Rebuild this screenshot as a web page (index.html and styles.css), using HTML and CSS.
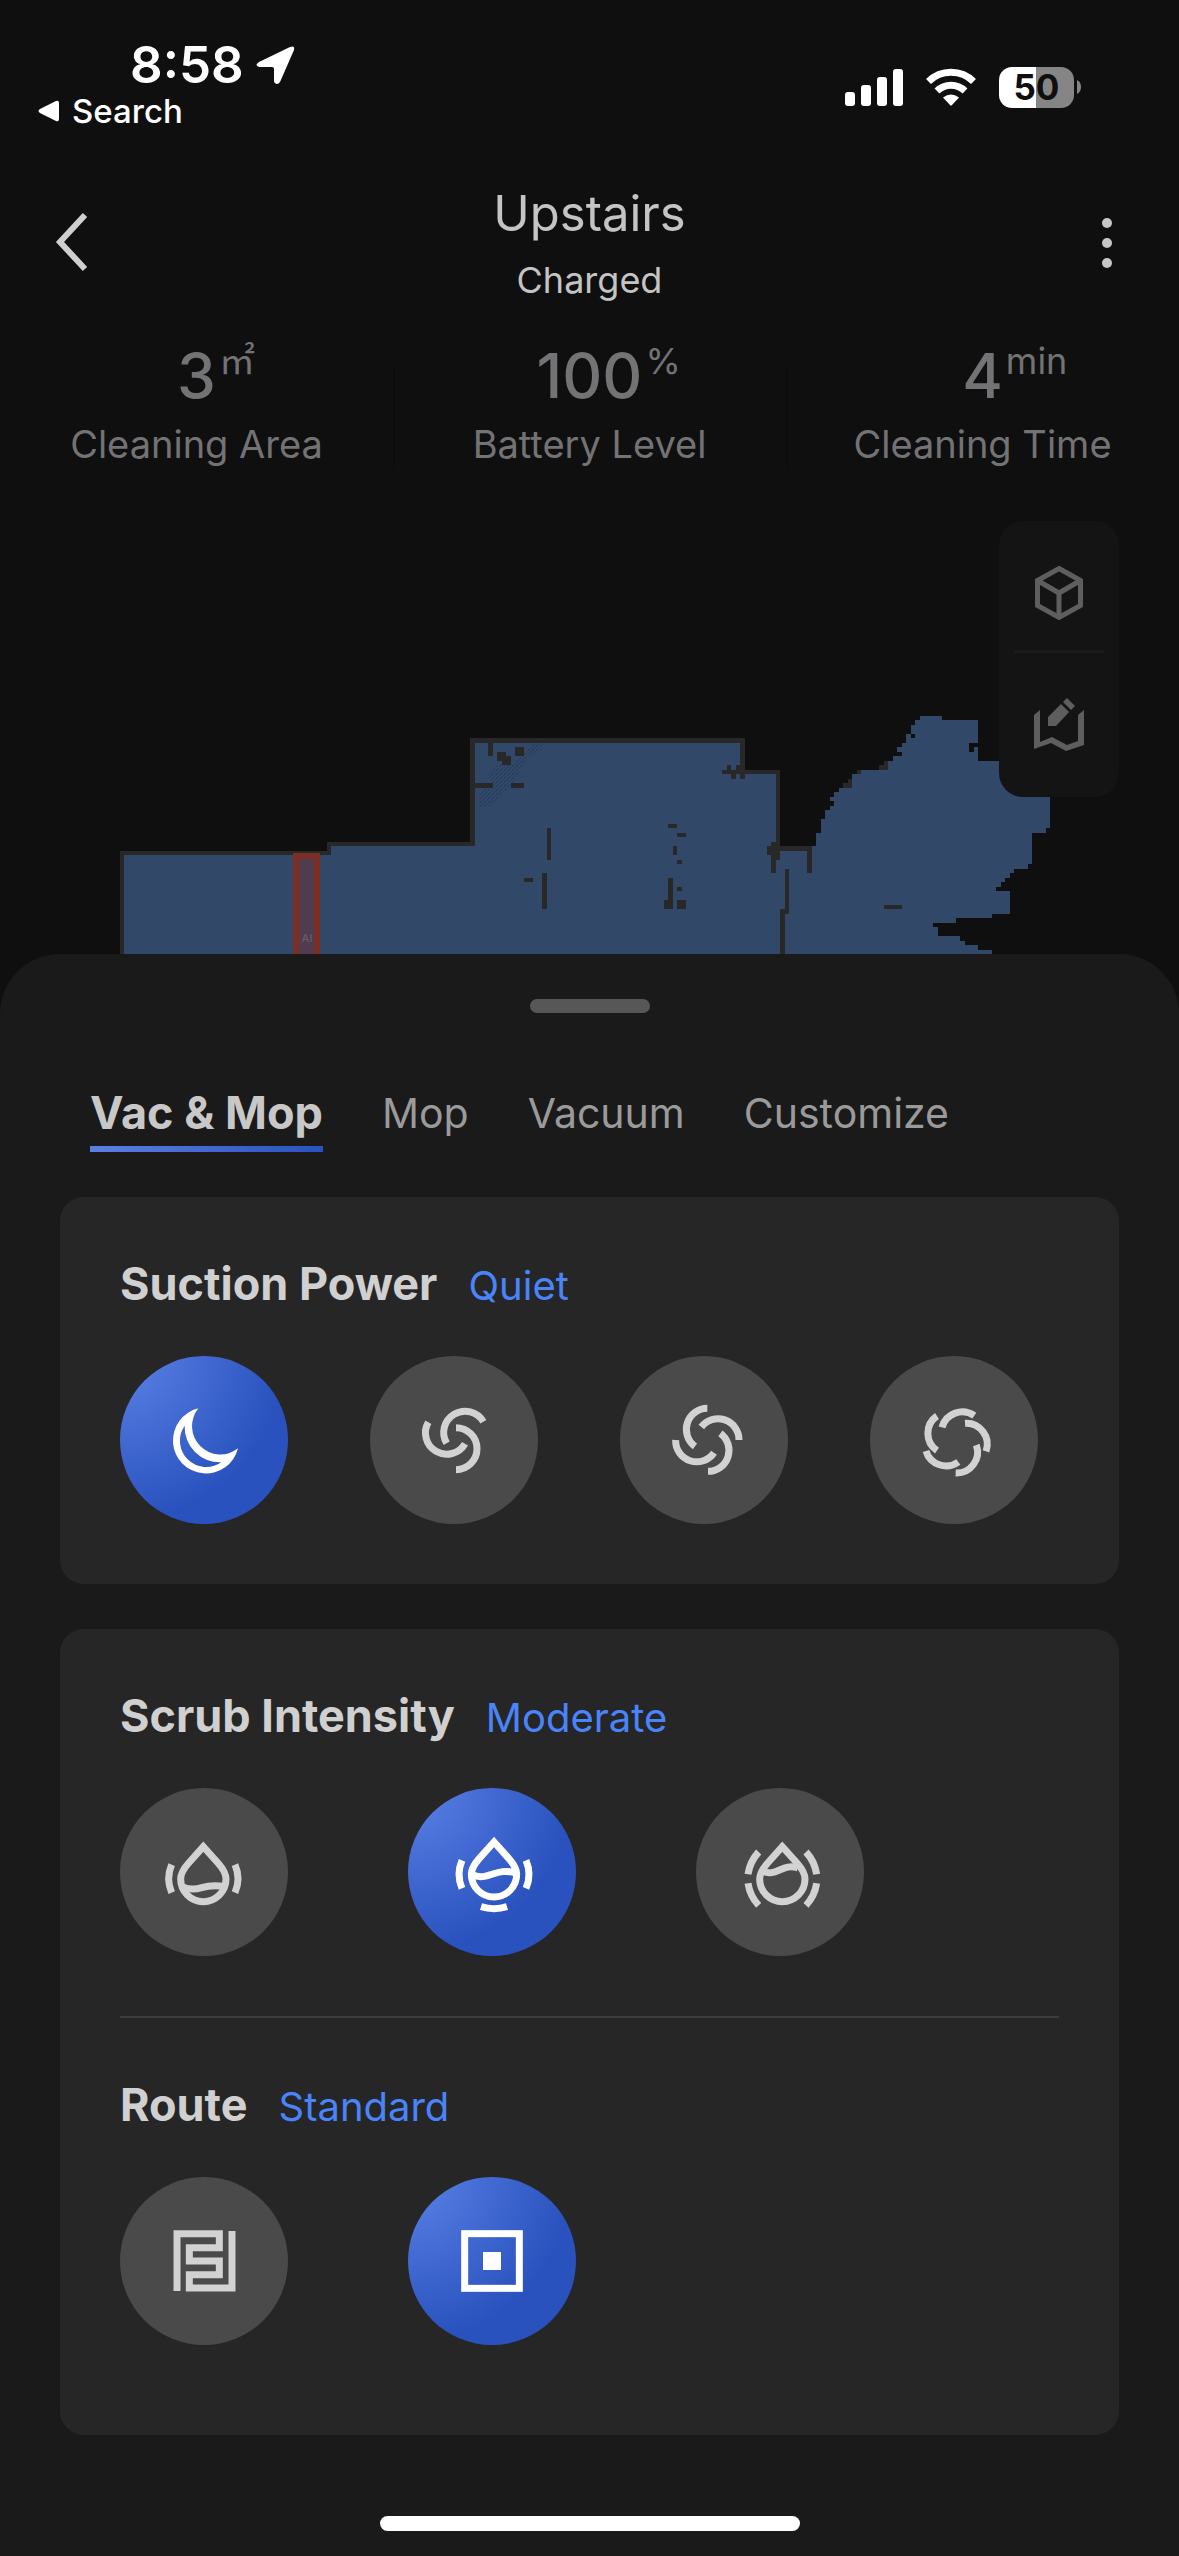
FILE: index.html
```html
<!DOCTYPE html>
<html lang="en">
<head>
    <meta charset="UTF-8">
    <meta name="viewport" content="width=device-width, initial-scale=1.0">
    <title>Upstairs</title>
    <link rel="stylesheet" href="styles.css">
</head>
<body>

<!-- Status Bar -->
<div class="status-bar">
    <div class="status-left">
        <div class="status-time">
            <span>8:58</span>
            <svg class="location-icon" viewBox="0 0 40 40"><path d="M3 17 L34 2 Q39 0 38 5 L24 37 Q21 41 18 37 L18 24 Q18 22 16 22 L3 22 Q-2 20 3 17Z" fill="#fff"/></svg>
        </div>
        <a href="#" class="back-to-app">
            <svg class="back-triangle" viewBox="0 0 22 22"><path d="M2 9 L18 1 Q21 0 21 3 V19 Q21 22 18 21 L2 13 Q-1 11 2 9Z" fill="#fff"/></svg>
            Search
        </a>
    </div>
    <div class="status-right">
        <svg class="signal-icon" viewBox="0 0 58 38" fill="#fff">
            <rect x="0" y="24" width="10" height="14" rx="3"/>
            <rect x="16" y="17" width="10" height="21" rx="3"/>
            <rect x="32" y="9" width="10" height="29" rx="3"/>
            <rect x="48" y="1" width="10" height="37" rx="3"/>
        </svg>
        <svg class="wifi-icon" viewBox="0 0 52 38">
            <path d="M3.500 13.500 A32 32 0 0 1 48.500 13.500" fill="none" stroke="#fff" stroke-width="7"/>
            <path d="M12 23 A20 20 0 0 1 40 23" fill="none" stroke="#fff" stroke-width="7"/>
            <path d="M18 29.500 Q26 23.500 34 29.500 L27 37 Q26 38 25 37Z" fill="#fff"/>
        </svg>
        <div class="battery">
            <span class="battery-level">50</span>
            <svg class="battery-tip" viewBox="0 0 4 14"><path d="M0 0 Q4 2 4 7 Q4 12 0 14Z" fill="#858585"/></svg>
        </div>
    </div>
</div>

<!-- Header -->
<header class="header">
    <button class="icon-button" aria-label="Back">
        <svg width="34" height="60" viewBox="0 0 34 60"><path d="M30 2 L5 29 L30 56" fill="none" stroke="#cfcfcf" stroke-width="6"/></svg>
    </button>
    <div class="header-text">
        <h1>Upstairs</h1>
        <p>Charged</p>
    </div>
    <button class="icon-button" aria-label="More">
        <svg width="10" height="50" viewBox="0 0 10 50" fill="#c6c6c6">
            <circle cx="5" cy="5" r="5"/>
            <circle cx="5" cy="25" r="5"/>
            <circle cx="5" cy="45" r="5"/>
        </svg>
    </button>
</header>

<!-- Cleaning Stats -->
<section class="stats">
    <div class="stat">
        <div class="stat-value"><span class="number">3</span><span class="unit">㎡</span></div>
        <div class="stat-label">Cleaning Area</div>
    </div>
    <div class="stat">
        <div class="stat-value"><span class="number">100</span><span class="unit">%</span></div>
        <div class="stat-label">Battery Level</div>
    </div>
    <div class="stat">
        <div class="stat-value"><span class="number">4</span><span class="unit">min</span></div>
        <div class="stat-label">Cleaning Time</div>
    </div>
</section>

<!-- Map -->
<section class="map">
    <svg class="map-image" viewBox="0 469 1179 486" role="img" aria-label="Floor map">
        <defs>
            <pattern id="carpet" width="4" height="4" patternUnits="userSpaceOnUse">
                <path d="M0 3h1v1h-1z M1 2h1v1h-1z M2 1h1v1h-1z M3 0h1v1h-1z M0 2h1v1h-1z" fill="#293d5c"/>
            </pattern>
        </defs>
        <g shape-rendering="crispEdges">
            <!-- Rooms -->
            <path fill="#324868" d="M122 955 V854 H329 V845 H473 V741 H743 V773 H778 V850 H812 V847 H816 V834 H821 V820 H825 V811 H830 V807 H834 V802 H830 V798 H834 V793 H839 V789 H852 V775 H861 V771 H888 V762 H893 V757 H902 V753 H897 V748 H902 V744 H906 V735 H911 V726 H915 V721 H920 V717 H942 V721 H978 V762 H1050 V829 H1046 V834 H1032 V865 H1028 V870 H1014 V874 H1010 V879 H1005 V883 H1001 V888 H996 V892 H1010 V915 H992 V919 H956 V924 H933 V928 H938 V937 H960 V942 H965 V946 H978 V951 H992 V955Z"/>
            <path fill="#0f0f0f" d="M911 735h4v4h-4z M969 744h9v4h-4v5h-5z"/>
            <path fill="url(#carpet)" d="M532 744 H547 L535 757 H528 L520 772 L515 782 L490 807 H479 V797 L490 784 L488 775 L497 766 H511Z"/>
            <!-- Outer walls -->
            <path fill="#282828" d="M120 852H327V843H470V739H745V771H780V847H812V874H807V852H780V861H776V874H771V856H767V847H771V843H776V775H745V780H740V775H736V780H731V775H722V771H727V766H731V771H736V766H740V744H475V847H331V856H124V955H120Z"/>
            <!-- Inner walls and obstacles -->
            <path fill="#282828" d="M488 744h5v13h-5z M497 753h9v9h-9z M502 757h9v9h-9z M515 748h9v9h-9z M475 784h18v5h-18z M511 784h13v5h-13z M547 829h4v32h-4z M524 879h9v4h-9z M542 874h5v36h-5z"/>
            <path fill="#282828" d="M668 825h9v4h-9z M677 834h9v4h-9z M673 847h4v9h-4z M677 861h5v4h-5z M668 879h5v22h-5z M664 901h9v9h-9z M677 888h5v4h-5z M677 901h9v9h-9z M884 906h18v4h-18z"/>
            <path fill="#282828" d="M785 870h4v45h-4z M780 910h5v45h-5z M884 762h4v4h-4z M879 766h9v5h-9z M857 771h4v4h-4z M848 780h4v4h-4z M843 784h9v5h-9z"/>
            <!-- No-go zone -->
            <rect x="293" y="854" width="27" height="110" fill="#7d2e24"/>
            <rect x="299" y="860" width="15" height="104" fill="#4f3c4e"/>
        </g>
        <text class="zone-label" x="307" y="943" text-anchor="middle">AI</text>
    </svg>
    <div class="map-tools">
        <button class="map-tool" aria-label="3D map">
            <svg width="50" height="56" viewBox="0 0 50 56" fill="none" stroke="#5e5e5e" stroke-width="5">
                <path d="M25 3.500 L46.500 15.500 V40.500 L25 52.500 L3.500 40.500 V15.500Z"/>
                <path d="M3.500 15.500 L25 28 L46.500 15.500 M25 28 V52"/>
            </svg>
        </button>
        <button class="map-tool" aria-label="Edit map">
            <svg width="50" height="54" viewBox="0 0 50 54" fill="#5e5e5e">
                <path d="M0 17 L6 12 V44 L18 39 L33 47 L44 43 V17 L50 12 V47 L32 53 L17 45 L0 51Z"/>
                <path d="M14 19 L27 6 L35 14 L22 28 H14Z M29 4 L33 0 L41 8 L37 12Z"/>
            </svg>
        </button>
    </div>
</section>

<!-- Bottom Sheet -->
<main class="sheet">
    <div class="handle"></div>

    <nav class="tabs">
        <button class="tab active">Vac &amp; Mop</button>
        <button class="tab">Mop</button>
        <button class="tab">Vacuum</button>
        <button class="tab">Customize</button>
    </nav>

    <section class="card">
        <div class="card-title">
            <h2>Suction Power</h2>
            <span>Quiet</span>
        </div>
        <div class="options suction">
            <button class="option selected" aria-label="Quiet">
                <svg viewBox="0 0 504 504"><path fill="currentColor" fill-rule="evenodd" d="M235 157 A99 99 0 1 0 354 277 A85 85 0 0 1 235 157Z M194 209 A79 79 0 0 0 304 319 A106 106 0 0 1 194 209Z"/></svg>
            </button>
            <button class="option" aria-label="Standard">
                <svg class="line-icon" viewBox="0 0 504 504">
                    <path d="M340 197 A63 63 0 0 0 230 262"/>
                    <path d="M258 215 A63 63 0 0 1 258 341"/>
                    <path d="M175 199 A63 63 0 0 0 285 263"/>
                </svg>
            </button>
            <button class="option" aria-label="Strong">
                <svg class="line-icon" viewBox="0 0 504 504">
                    <path d="M262 157 A63 63 0 0 0 225 271"/>
                    <path d="M244 213 A63 63 0 0 1 357 252"/>
                    <path d="M301 232 A63 63 0 0 1 264 346"/>
                    <path d="M167 252 A63 63 0 0 0 282 290"/>
                </svg>
            </button>
            <button class="option" aria-label="Max">
                <svg class="line-icon" viewBox="0 0 504 504">
                    <path d="M216 214 A63 63 0 0 1 313 179"/>
                    <path d="M285 202 A63 63 0 0 1 348 286"/>
                    <path d="M319 267 A63 63 0 0 1 257 351"/>
                    <path d="M168 285 A63 63 0 0 0 265 318"/>
                    <path d="M201 180 A63 63 0 0 0 201 284"/>
                </svg>
            </button>
        </div>
    </section>

    <section class="card card-tall">
        <div class="card-title">
            <h2>Scrub Intensity</h2>
            <span>Moderate</span>
        </div>
        <div class="options">
            <button class="option" aria-label="Mild">
                <svg class="line-icon" viewBox="0 0 504 504">
                    <path d="M250 176 L206 225 Q182 252 182 273 A68 68 0 0 0 318 273 Q318 252 294 225Z"/>
                    <path d="M190 298 Q216 308 245 299 T312 295"/>
                    <path d="M155 230 Q137 272 155 314"/>
                    <path d="M345 230 Q363 272 345 314"/>
                </svg>
            </button>
            <button class="option selected" aria-label="Moderate">
                <svg class="line-icon" viewBox="0 0 504 504">
                    <path d="M258 162 L214 211 Q190 238 190 259 A68 68 0 0 0 326 259 Q326 238 302 211Z"/>
                    <path d="M192 260 C240 282 262 236 324 255"/>
                    <path d="M162 217 Q144 259 162 301"/>
                    <path d="M354 217 Q372 259 354 301"/>
                    <path d="M219 356 Q258 368 297 356"/>
                </svg>
            </button>
            <button class="option" aria-label="Intense">
                <svg class="line-icon" viewBox="0 0 504 504">
                    <path d="M259 176 L215 225 Q191 252 191 273 A68 68 0 0 0 327 273 Q327 252 303 225Z"/>
                    <path d="M200 250 C240 268 260 224 306 240"/>
                    <path d="M156 259 Q162 220 188 192"/>
                    <path d="M362 259 Q356 220 330 192"/>
                    <path d="M156 286 Q162 325 188 352"/>
                    <path d="M362 286 Q356 325 330 352"/>
                </svg>
            </button>
        </div>

        <hr>

        <div class="card-title">
            <h2>Route</h2>
            <span>Standard</span>
        </div>
        <div class="options">
            <button class="option" aria-label="Deep">
                <svg class="line-icon" viewBox="0 0 504 504"><path d="M171 342 V170 H298 V212 H208 V252 H298 V293 H208 V333 H336 V162"/></svg>
            </button>
            <button class="option selected" aria-label="Standard">
                <svg class="line-icon" viewBox="0 0 504 504">
                    <rect x="170" y="170" width="164" height="164"/>
                    <rect x="225" y="225" width="54" height="54" fill="currentColor" stroke="none"/>
                </svg>
            </button>
        </div>
    </section>

    <div class="home-indicator"></div>
</main>

</body>
</html>
```
FILE: styles.css
```css
/* General Reset */
* {
    margin: 0;
    padding: 0;
    box-sizing: border-box;
}

body {
    font-family: 'Inter', 'Noto Sans CJK SC', sans-serif;
    background-color: #0f0f0f;
    color: #d0d0d0;
    min-height: 100vh;
    display: flex;
    flex-direction: column;
}

button {
    font-family: inherit;
    color: inherit;
    background: none;
    border: none;
    cursor: pointer;
}

svg {
    display: block;
}

/* Status Bar */
.status-bar {
    display: flex;
    justify-content: space-between;
    align-items: center;
    padding: 38px 98px 0 38px;
    color: #fff;
}

.status-time {
    display: flex;
    align-items: center;
    gap: 12px;
    padding-left: 92px;
    font-size: 51px;
    font-weight: 600;
    line-height: 54px;
}

.location-icon {
    width: 40px;
    height: 40px;
}

.back-to-app {
    display: flex;
    align-items: center;
    gap: 12px;
    font-size: 33px;
    font-weight: 500;
    line-height: 38px;
    color: #fff;
    text-decoration: none;
}

.back-triangle {
    width: 22px;
    height: 22px;
}

.status-right {
    display: flex;
    align-items: center;
    gap: 22px;
    padding-top: 6px;
}

.signal-icon {
    width: 58px;
    height: 38px;
}

.wifi-icon {
    width: 52px;
    height: 38px;
}

.battery {
    display: flex;
    align-items: center;
    gap: 3px;
}

.battery-level {
    width: 75px;
    border-radius: 13px;
    background: linear-gradient(90deg, #fff 50%, #858585 50%);
    color: #0f0f0f;
    font-size: 35px;
    font-weight: 700;
    line-height: 41px;
    text-align: center;
}

.battery-tip {
    width: 4px;
    height: 14px;
}

/* Header */
.header {
    display: flex;
    justify-content: space-between;
    align-items: center;
    padding: 54px 52px 0;
}

.icon-button {
    width: 40px;
    display: flex;
    justify-content: center;
}

.header-text {
    text-align: center;
    color: #c4c4c4;
}

.header-text h1 {
    font-size: 49px;
    font-weight: 400;
    line-height: 60px;
    margin-bottom: 14px;
}

.header-text p {
    font-size: 36px;
    line-height: 44px;
}

/* Cleaning Stats */
.stats {
    display: grid;
    grid-template-columns: repeat(3, 1fr);
    padding-top: 40px;
    color: #737375;
    text-align: center;
}

.stat + .stat {
    background: linear-gradient(#0c0c0c, #0c0c0c) left bottom / 2px 100px no-repeat;
}

.stat-value {
    display: grid;
    grid-template-columns: 1fr auto 1fr;
    column-gap: 3px;
    margin-bottom: 10px;
}

.number {
    grid-column: 2;
    font-size: 62px;
    font-weight: 500;
    line-height: 68px;
}

.unit {
    font-size: 36px;
    line-height: 38px;
    text-align: left;
}

.stat-label {
    font-size: 38px;
    line-height: 48px;
}

/* Map */
.map {
    position: relative;
}

.map-image {
    width: 100%;
    height: auto;
}

.zone-label {
    font-size: 11px;
    font-weight: 500;
    fill: #6b5a6a;
}

.map-tools {
    position: absolute;
    top: 53px;
    right: 60px;
    width: 120px;
    padding: 0 15px;
    background-color: #141414;
    border-radius: 24px;
}

.map-tool {
    display: flex;
    justify-content: center;
    align-items: center;
    width: 100%;
    height: 147px;
}

.map-tool:first-child {
    height: 129px;
    padding-top: 14px;
}

.map-tool + .map-tool {
    border-top: 3px solid #1a1a1a;
}

/* Bottom Sheet */
.sheet {
    flex: 1;
    padding: 45px 60px 23px;
    background-color: #1a1a1a;
    border-radius: 60px 60px 0 0;
}

.handle {
    width: 120px;
    height: 14px;
    margin: 0 auto 73px;
    border-radius: 7px;
    background-color: #575757;
}

.tabs {
    display: flex;
    gap: 59px;
    padding-left: 30px;
    margin-bottom: 45px;
}

.tab {
    font-size: 41px;
    line-height: 54px;
    padding-bottom: 12px;
    color: #9a9a9a;
}

.tab.active {
    font-size: 45px;
    font-weight: 700;
    color: #c8c8c8;
    background: linear-gradient(90deg, #5b80e2, #2a52be) bottom / 100% 6px no-repeat;
}

/* Cards */
.card {
    padding: 60px;
    margin-bottom: 45px;
    background-color: #262626;
    border-radius: 24px;
}

.card-tall {
    padding-bottom: 90px;
    margin-bottom: 81px;
}

.card-title {
    display: flex;
    align-items: baseline;
    gap: 31px;
    height: 54px;
    line-height: 54px;
    margin-bottom: 45px;
}

.card-title h2 {
    font-size: 45px;
    font-weight: 700;
}

.card-title span {
    font-size: 40px;
    color: #4a84fa;
}

.card hr {
    height: 2px;
    margin: 60px 0;
    border: none;
    background-color: #3c3c3c;
}

.options {
    display: flex;
    gap: 120px;
}

.options.suction {
    gap: 82px;
}

.option {
    width: 168px;
    height: 168px;
    border-radius: 50%;
    background-color: #4a4a4a;
    color: #d2d2d2;
}

.option.selected {
    background: radial-gradient(circle at 0 0, #5b82e6, #2a52be 69%);
    color: #fff;
}

.line-icon {
    fill: none;
    stroke: currentColor;
    stroke-width: 21px;
}

.home-indicator {
    width: 420px;
    height: 15px;
    margin: 0 auto;
    border-radius: 8px;
    background-color: #fff;
}
```
